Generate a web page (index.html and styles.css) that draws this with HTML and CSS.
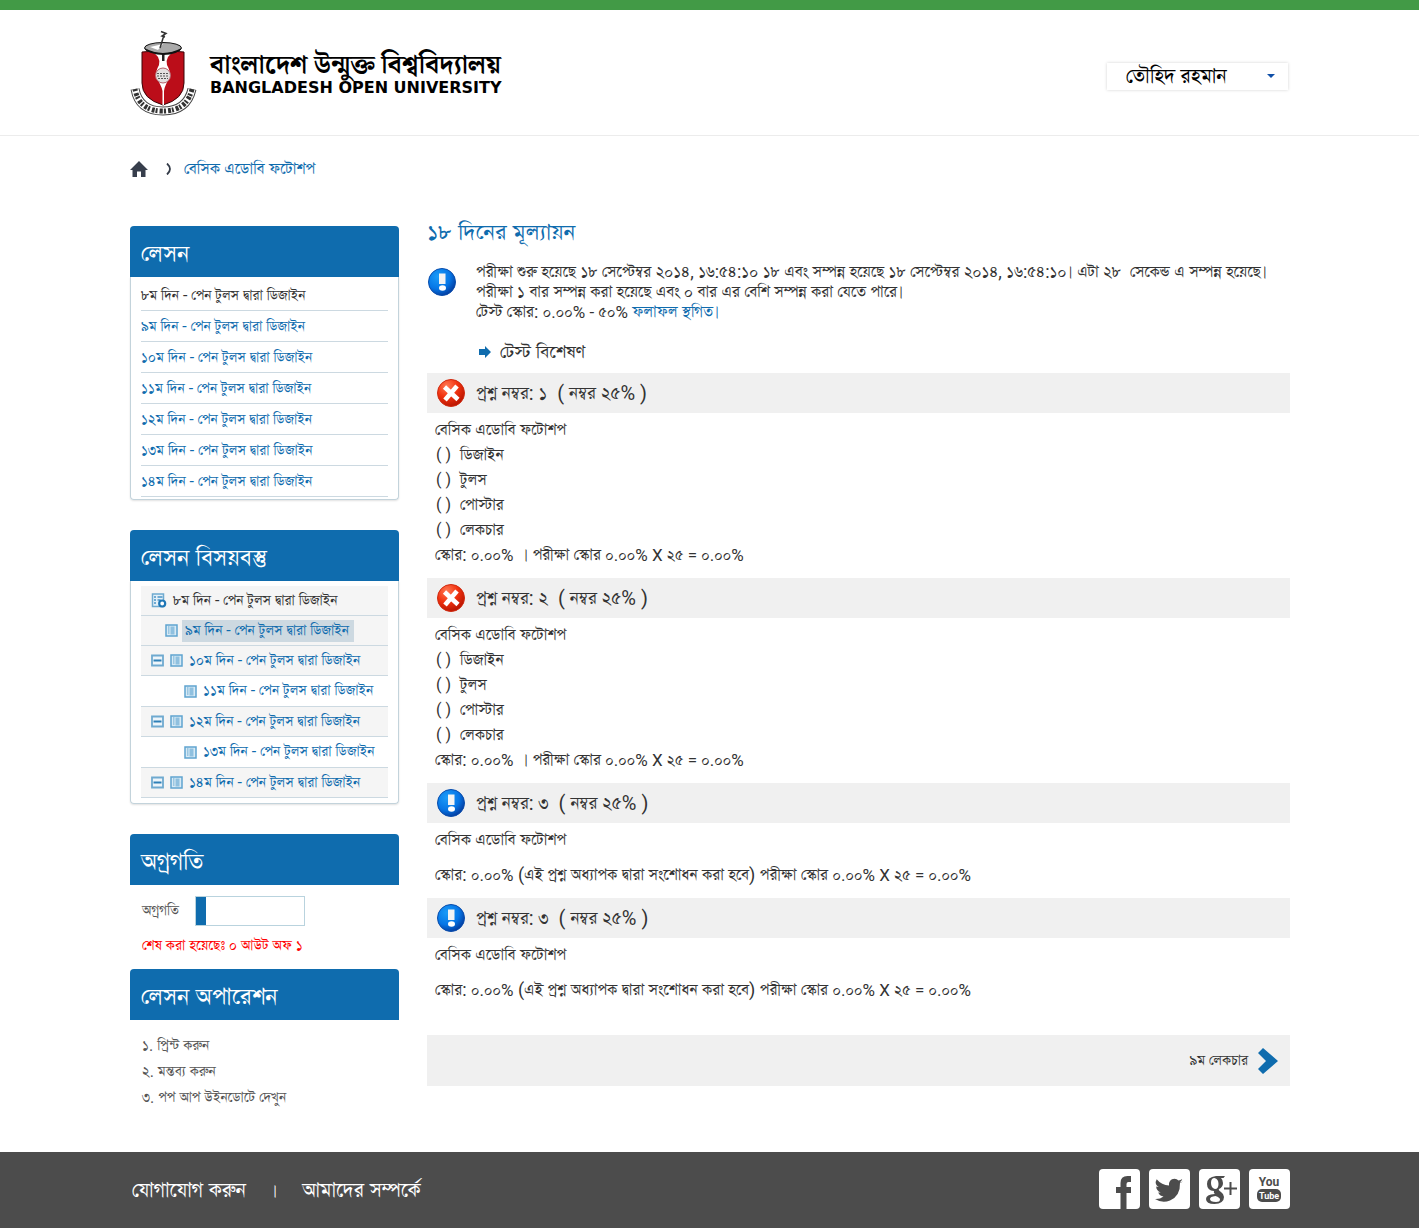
FILE: index.html
```
<!DOCTYPE html>
<html lang="bn">
<head>
<meta charset="utf-8">
<meta name="viewport" content="width=device-width, initial-scale=1">
<title>১৮ দিনের মূল্যায়ন</title>
<link rel="stylesheet" href="styles.css">
</head>
<body>
<svg class="sprite" width="0" height="0" aria-hidden="true">
  <defs>
    <radialGradient id="blue" cx="35%" cy="30%" r="75%"><stop offset="0" stop-color="#1b9cf8"/><stop offset=".6" stop-color="#0676e6"/><stop offset="1" stop-color="#033a9c"/></radialGradient>
    <radialGradient id="red" cx="35%" cy="25%" r="80%"><stop offset="0" stop-color="#ff7a55"/><stop offset=".5" stop-color="#f23310"/><stop offset="1" stop-color="#b41200"/></radialGradient>
    <symbol id="info" viewBox="0 0 28 28"><circle cx="14" cy="14" r="13.500" fill="url(#blue)" stroke="#0a4cab"/><path d="M11 5.500h6.500v10.500h-6.500z" fill="#f4f4f4"/><ellipse cx="14.500" cy="20" rx="3.500" ry="2.800" fill="#fff"/></symbol>
    <symbol id="wrong" viewBox="0 0 28 28"><circle cx="14" cy="14" r="13.500" fill="url(#red)" stroke="#cf2a10"/><path d="M7.500 8 21 20.500M20 7 8 21" stroke="#fff" stroke-width="4.600"/></symbol>
    <symbol id="page" viewBox="0 0 13 13"><path d="M1 1h11v11H1z" fill="#d8eaf5" stroke="#5fa4cf" stroke-width="1.500"/><path d="M3 3h1.500M3 5h1.500M3 7h1.500M3 9h1.500" stroke="#5fa4cf"/><path d="M5.500 2.500h4v8h-4z" fill="#8fc0df"/></symbol>
    <symbol id="minus" viewBox="0 0 13 13"><path d="M1 1.500h11v10H1z" fill="#eef5fa" stroke="#6faad0" stroke-width="1.800"/><path d="M2.500 6.500h8" stroke="#2f80b8" stroke-width="2"/></symbol>
    <symbol id="gearpage" viewBox="0 0 15 15"><path d="M1 1h11v12.500H1z" fill="#e4f0f8" stroke="#6faad0" stroke-width="1.500"/><path d="M2.500 4h2M2.500 7h2M2.500 10h2M6 4h5M6 7h3" stroke="#4a94c6" stroke-width="1.500"/><circle cx="10.700" cy="10.500" r="3" fill="#fff" stroke="#1f77b6" stroke-width="2.200"/></symbol>
  </defs>
</svg>

<header class="site-header">
  <a class="brand" href="#">
    <svg class="emblem" viewBox="0 0 68 88" aria-hidden="true">
      <path d="M12 23Q33 20 54 23V54Q54 70 33 76Q12 70 12 54Z" fill="#bb0d19" stroke="#3a0508"/>
      <path d="M22 23Q31 27 29 36 25 43 26 49 31 55 32.500 62V76h1.500V62Q35 55 40 49 41 43 37 36 35 27 44 23z" fill="#fff"/>
      <path d="M32 22h2.500v10H32z" fill="#222"/>
      <ellipse cx="33" cy="19" rx="18.500" ry="5.500" fill="#aaa" stroke="#111"/>
      <path d="M14.500 19q18.500 10 37 0-4 7-18 7t-19-7z" fill="#111"/><path d="M20 18l13-3-5 6z" fill="#fff"/>
      <path d="M30 19 34 6M31 2.500l5 2-4 2.500 3 1" fill="none" stroke="#333" stroke-width="1.500"/>
      <circle cx="33" cy="46.500" r="7.500" fill="#e4e0e0" stroke="#b5606a"/><path d="M27 44.500h12M27 47h12M28 49.500h10" stroke="#555" stroke-dasharray="2 1"/>
      <path d="M5 60Q9 82 33 82T62 60" fill="none" stroke="#444" stroke-width="9"/>
      <path d="M5 60Q9 82 33 82T62 60" fill="none" stroke="#fff" stroke-width="7"/>
      <path d="M5 60Q9 82 33 82T62 60" fill="none" stroke="#333" stroke-width="5" stroke-dasharray="2 2 3 1"/>
    </svg>
    <span class="wordmark"><span class="wordmark-bn">বাংলাদেশ উন্মুক্ত বিশ্ববিদ্যালয়</span><span class="wordmark-en">BANGLADESH OPEN UNIVERSITY</span></span>
  </a>
  <label class="account"><select aria-label="ব্যবহারকারী"><option>তৌহিদ রহমান</option></select></label>
</header>

<nav class="breadcrumb" aria-label="পথ">
  <a href="#" aria-label="হোম"><svg width="18" height="16" viewBox="0 0 18 16"><path d="M9 0 18 9H15.500V16H11V10.500H7V16H2.500V9H0Z" fill="#373e4c"/></svg></a>
  <svg width="6" height="12" viewBox="0 0 6 12" aria-hidden="true"><path d="M1 .5Q7 6 1 11.500" fill="none" stroke="#333b48" stroke-width="1.800"/></svg>
  <a href="#">বেসিক এডোবি ফটোশপ</a>
</nav>

<div class="columns">
  <aside class="sidebar">
    <section class="panel boxed">
      <h2>লেসন</h2>
      <ul class="lessons">
        <li>৮ম দিন - পেন টুলস দ্বারা ডিজাইন</li>
        <li><a href="#">৯ম দিন - পেন টুলস দ্বারা ডিজাইন</a></li>
        <li><a href="#">১০ম দিন - পেন টুলস দ্বারা ডিজাইন</a></li>
        <li><a href="#">১১ম দিন - পেন টুলস দ্বারা ডিজাইন</a></li>
        <li><a href="#">১২ম দিন - পেন টুলস দ্বারা ডিজাইন</a></li>
        <li><a href="#">১৩ম দিন - পেন টুলস দ্বারা ডিজাইন</a></li>
        <li><a href="#">১৪ম দিন - পেন টুলস দ্বারা ডিজাইন</a></li>
      </ul>
    </section>

    <section class="panel boxed">
      <h2>লেসন বিসয়বস্তু</h2>
      <ul class="lessons tree">
        <li class="shade"><svg class="icon-lg"><use href="#gearpage"/></svg>৮ম দিন - পেন টুলস দ্বারা ডিজাইন</li>
        <li class="shade level-1"><svg class="icon"><use href="#page"/></svg><a class="current" href="#">৯ম দিন - পেন টুলস দ্বারা ডিজাইন</a></li>
        <li class="shade"><svg class="icon"><use href="#minus"/></svg><svg class="icon"><use href="#page"/></svg><a href="#">১০ম দিন - পেন টুলস দ্বারা ডিজাইন</a></li>
        <li class="level-2"><svg class="icon"><use href="#page"/></svg><a href="#">১১ম দিন - পেন টুলস দ্বারা ডিজাইন</a></li>
        <li class="shade"><svg class="icon"><use href="#minus"/></svg><svg class="icon"><use href="#page"/></svg><a href="#">১২ম দিন - পেন টুলস দ্বারা ডিজাইন</a></li>
        <li class="level-2"><svg class="icon"><use href="#page"/></svg><a href="#">১৩ম দিন - পেন টুলস দ্বারা ডিজাইন</a></li>
        <li class="shade"><svg class="icon"><use href="#minus"/></svg><svg class="icon"><use href="#page"/></svg><a href="#">১৪ম দিন - পেন টুলস দ্বারা ডিজাইন</a></li>
      </ul>
    </section>

    <section class="panel">
      <h2>অগ্রগতি</h2>
      <div class="progress-row"><label for="progress">অগ্রগতি</label><progress id="progress" value="10" max="108"></progress></div>
      <p class="progress-note">শেষ করা হয়েছেঃ ০ আউট অফ ১</p>
    </section>

    <section class="panel">
      <h2>লেসন অপারেশন</h2>
      <ul class="operations">
        <li><a href="#">১. প্রিন্ট করুন</a></li>
        <li><a href="#">২. মন্তব্য করুন</a></li>
        <li><a href="#">৩. পপ আপ উইনডোটে দেখুন</a></li>
      </ul>
    </section>
  </aside>

  <main>
    <h1>১৮ দিনের মূল্যায়ন</h1>
    <div class="summary">
      <svg class="status"><use href="#info"/></svg>
      <p>পরীক্ষা শুরু হয়েছে ১৮ সেপ্টেম্বর ২০১৪, ১৬:৫৪:১০ ১৮ এবং সম্পন্ন হয়েছে ১৮ সেপ্টেম্বর ২০১৪, ১৬:৫৪:১০। এটা ২৮ &nbsp;সেকেন্ড এ সম্পন্ন হয়েছে।<br>পরীক্ষা ১ বার সম্পন্ন করা হয়েছে এবং ০ বার এর বেশি সম্পন্ন করা যেতে পারে।<br>টেস্ট স্কোর: <span class="figures">০.০০% - ৫০%</span> <a href="#">ফলাফল স্থগিত।</a></p>
    </div>
    <h2 class="analysis"><svg width="12" height="12" viewBox="0 0 12 12" aria-hidden="true"><path d="M0 3h6V0l6 6-6 6V9H0z" fill="#0f6cae"/></svg>টেস্ট বিশেষণ</h2>

    <section class="question">
      <h3><svg class="status"><use href="#wrong"/></svg>প্রশ্ন নম্বর: ১ &nbsp;( নম্বর ২৫% )</h3>
      <p>বেসিক এডোবি ফটোশপ</p>
      <ul><li><span>( )</span>ডিজাইন</li><li><span>( )</span>টুলস</li><li><span>( )</span>পোস্টার</li><li><span>( )</span>লেকচার</li></ul>
      <p class="score">স্কোর: <span class="figures">০.০০% &nbsp;</span>। পরীক্ষা স্কোর <span class="figures">০.০০% X ২৫ = ০.০০%</span></p>
    </section>
    <section class="question">
      <h3><svg class="status"><use href="#wrong"/></svg>প্রশ্ন নম্বর: ২ &nbsp;( নম্বর ২৫% )</h3>
      <p>বেসিক এডোবি ফটোশপ</p>
      <ul><li><span>( )</span>ডিজাইন</li><li><span>( )</span>টুলস</li><li><span>( )</span>পোস্টার</li><li><span>( )</span>লেকচার</li></ul>
      <p class="score">স্কোর: <span class="figures">০.০০% &nbsp;</span>। পরীক্ষা স্কোর <span class="figures">০.০০% X ২৫ = ০.০০%</span></p>
    </section>
    <section class="question open">
      <h3><svg class="status"><use href="#info"/></svg>প্রশ্ন নম্বর: ৩ &nbsp;( নম্বর ২৫% )</h3>
      <p>বেসিক এডোবি ফটোশপ</p>
      <p class="score">স্কোর: <span class="figures">০.০০%</span> (এই প্রশ্ন অধ্যাপক দ্বারা সংশোধন করা হবে) পরীক্ষা স্কোর <span class="figures">০.০০% X ২৫ = ০.০০%</span></p>
    </section>
    <section class="question open">
      <h3><svg class="status"><use href="#info"/></svg>প্রশ্ন নম্বর: ৩ &nbsp;( নম্বর ২৫% )</h3>
      <p>বেসিক এডোবি ফটোশপ</p>
      <p class="score">স্কোর: <span class="figures">০.০০%</span> (এই প্রশ্ন অধ্যাপক দ্বারা সংশোধন করা হবে) পরীক্ষা স্কোর <span class="figures">০.০০% X ২৫ = ০.০০%</span></p>
    </section>

    <a class="next" href="#">৯ম লেকচার<svg width="20" height="26" viewBox="0 0 20 26" aria-hidden="true"><path d="M5 0 20 13 5 26 0 21 8 13 0 5z" fill="#0f6cae"/></svg></a>
  </main>
</div>

<footer class="site-footer">
  <nav class="footer-links"><a href="#">যোগাযোগ করুন</a><span>।</span><a href="#">আমাদের সম্পর্কে</a></nav>
  <div class="social">
    <a href="#" aria-label="Facebook"><svg viewBox="0 0 41 40"><path d="M21.500 40V24H17v-6h4.500v-4q0-7 7-7H32v6h-2.500q-2 0-2 2v3H32v6h-4.500v16z"/></svg></a>
    <a href="#" aria-label="Twitter"><svg viewBox="0 0 41 40"><path d="M34 12.500q-1.300 1-3 1.300Q31.500 27 21 31.500q-8 3-15-1.500 5 .3 8.500-2.500-4-.4-5.300-4h2.500q-4.500-1.800-4.500-6l2.500.6Q5 15 7.700 10.300q5 6 12.300 6.300Q19.500 10 25.500 9.700q2.400 0 4 1.800 2-.4 3.700-1.500-.4 2-2.300 3.200 1.600-.1 3.100-.7z"/></svg></a>
    <a href="#" aria-label="Google+"><svg viewBox="0 0 41 40"><path fill-rule="evenodd" d="M26 7h-9q-9 1-9 8 0 6.500 7 7-.8 1.500.8 3Q7 25.500 7 30q0 5 8.500 5 9.500-.5 9.500-7 0-3-3-5t-2-3q4-2 4-6 0-3-2-5h2.500zM15.500 9q4 1 4 6t-3.500 5q-4-1-4-6t3.500-5zM16.500 27q4.500 1.500 4.500 3.500 0 2.500-4 2.500-6 0-6-3 0-2.500 5.500-3z"/><path d="M30.500 13h2v5.500H38v2h-5.500V26h-2v-5.500H25v-2h5.500z"/></svg></a>
    <a href="#" aria-label="YouTube"><svg viewBox="0 0 41 40"><text class="yt-you" x="20" y="17">You</text><rect x="8" y="20" width="24" height="13" rx="5"/><text class="yt-tube" x="20" y="30">Tube</text></svg></a>
  </div>
</footer>
</body>
</html>
```
FILE: styles.css
```
* { box-sizing: border-box; }
body {
  margin: 0;
  border-top: 10px solid #429a46;
  background: #fff;
  color: #333;
  font: 18px/20px "Roboto", "FreeSerif", "Mukti Narrow", "Noto Serif Bengali", sans-serif;
}
h1, h2, h3, p, ul { margin: 0; padding: 0; font-weight: normal; }
ul { list-style: none; }
a { color: #0f6cae; text-decoration: none; }
.sprite { position: absolute; }

.site-header, .breadcrumb, .columns, .site-footer { padding-left: 130px; padding-right: 129px; }

.site-header {
  display: flex;
  align-items: center;
  justify-content: space-between;
  height: 126px;
  border-bottom: 1px solid #ececec;
}
.brand { display: flex; align-items: center; gap: 12px; color: #000; }
.emblem { width: 68px; height: 88px; }
.wordmark { display: flex; flex-direction: column; padding-top: 2px; font-weight: bold; white-space: nowrap; }
.wordmark-bn { font-size: 26px; line-height: 28px; }
.wordmark-en { font: bold 16px/20px "DejaVu Sans", sans-serif; }
.account {
  display: grid;
  align-items: center;
  width: 181px;
  height: 27px;
  margin: 7px 2px 0 0;
  background: #fff;
  box-shadow: 0 0 3px rgba(0, 0, 0, .18);
}
.account select, .account::after { grid-area: 1 / 1; }
.account::after {
  content: "";
  justify-self: end;
  margin-right: 13px;
  border: 4px solid transparent;
  border-top-color: #0f4fa8;
  border-bottom: 0;
  pointer-events: none;
}
.account select {
  width: 100%;
  height: 27px;
  padding: 0 19px;
  border: 0;
  background: none;
  color: #000;
  font-family: inherit;
  font-size: 23px;
  line-height: 27px;
  appearance: none;
}

.breadcrumb { display: flex; align-items: center; height: 66px; }
.breadcrumb a:first-child { display: flex; margin-right: 18px; }
.breadcrumb a:last-child { margin-left: 12px; }

.columns { display: flex; gap: 28px; align-items: flex-start; padding-top: 16px; padding-bottom: 41px; }
.sidebar { flex: 0 0 269px; padding-top: 8px; font-size: 16px; }
main { flex: 1; min-width: 0; }

.panel h2 {
  height: 51px;
  padding: 5px 11px 0;
  border-radius: 4px 4px 0 0;
  background: #0f6cae;
  color: #fff;
  font-size: 27px;
  line-height: 47px;
}
.boxed { margin-bottom: 30px; }
.lessons {
  padding: 3px 10px 2px;
  border: 1px solid #c3d3db;
  border-top: 0;
  border-radius: 0 0 4px 4px;
  box-shadow: 0 1px 2px rgba(0, 0, 0, .12);
}
.lessons li { height: 31px; line-height: 32px; border-bottom: 1px solid #ccd9e1; white-space: nowrap; }
.tree { padding-top: 5px; padding-bottom: 5px; }
.tree li { display: flex; align-items: center; gap: 6px; padding-left: 10px; }
.tree .shade { height: 30px; background: #f5f5f5; }
.tree .level-1 { padding-left: 24px; gap: 4px; }
.tree .level-2 { padding-left: 43px; }
.tree .current { padding: 0 5px 0 3px; background: #cdd9e1; line-height: 22px; }
.icon { width: 13px; height: 13px; }
.icon-lg { width: 16px; height: 15px; }

.progress-row { display: flex; align-items: center; gap: 16px; height: 51px; padding: 0 12px; color: #555; }
progress { width: 110px; height: 30px; border: 1px solid #b9d3de; background: #fff; appearance: none; }
progress::-webkit-progress-bar { background: #fff; }
progress::-webkit-progress-value { background: #0f6cae; }
.progress-note { height: 33px; padding: 0 12px; color: #f00; }
.operations { padding: 13px 12px 0; line-height: 26px; }
.operations a { color: #555; }

h1 { color: #0f6cae; font-size: 26px; line-height: 28px; }
.summary { display: flex; align-items: flex-start; gap: 20px; margin-top: 16px; padding-left: 1px; }
.summary .status { margin-top: 6px; }
.status { flex: none; width: 28px; height: 28px; }
.figures { font-size: 17px; line-height: 1; }
.analysis { display: flex; align-items: center; gap: 9px; height: 40px; margin: 10px 0 1px 52px; font-size: 21px; }
.question { padding-bottom: 11px; line-height: 25px; }
.question h3 {
  display: flex;
  align-items: center;
  gap: 11px;
  height: 40px;
  margin-bottom: 4px;
  padding-left: 10px;
  background: #f0f0f0;
  font-size: 20px;
}
.question p { padding-left: 8px; }
.question li { display: flex; gap: 9px; padding-left: 9px; }
.question li span { font-size: 16px; }
.open .score { margin-top: 10px; }
.next {
  display: flex;
  align-items: center;
  justify-content: flex-end;
  gap: 10px;
  height: 51px;
  margin-top: 22px;
  padding-right: 12px;
  background: #f0f0f0;
  color: #333;
  font-size: 16px;
}

.site-footer {
  display: flex;
  align-items: center;
  justify-content: space-between;
  height: 76px;
  background: #4c4c4c;
  color: #fff;
  font-size: 23px;
}
.footer-links { display: flex; gap: 25px; padding: 2px 0 0 2px; }
.footer-links a { color: #fff; }
.footer-links span { font-size: 18px; }
.social { display: flex; gap: 9px; margin-bottom: 2px; }
.social a { width: 41px; height: 40px; border-radius: 4px; background: #fff; }
.social svg { display: block; width: 41px; height: 40px; fill: #4c4c4c; }
.social text { font-family: "Liberation Sans Narrow", "Roboto", sans-serif; font-weight: bold; text-anchor: middle; }
.yt-you { font-size: 12px; }
.yt-tube { font-size: 9px; fill: #fff; }
```
